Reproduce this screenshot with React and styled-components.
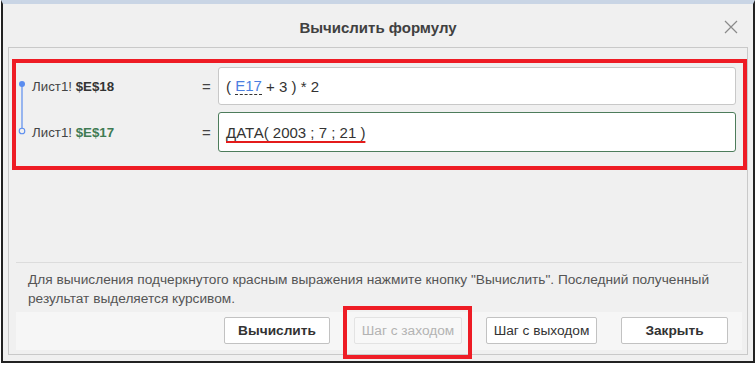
import styled, { createGlobalStyle } from "styled-components";

const GlobalStyle = createGlobalStyle`
    html, body {
        margin: 0;
        padding: 0;
        background: #ffffff;
    }
    body {
        font-family: "Liberation Sans", Arial, sans-serif;
        color: #333;
    }
    * {
        box-sizing: border-box;
    }
`;

const Window = styled.div`
    width: 754px;
    height: 363px;
    margin-left: 1px;
    display: flex;
    flex-direction: column;
    background: #f0f0f0;
    border: 2px solid #222;
    border-top: 4px solid #c9d5e5;
`;

const Header = styled.div`
    height: 43px;
    flex-shrink: 0;
    display: grid;
    grid-template-columns: 1fr auto 1fr;
    align-items: center;
`;

const Title = styled.h2`
    grid-column: 2;
    margin: 3px 0 0;
    font-size: 15px;
    font-weight: bold;
    color: #404040;
`;

const CloseButton = styled.button`
    grid-column: 3;
    justify-self: end;
    margin: 2px 15px 0 0;
    padding: 0;
    width: 15px;
    height: 15px;
    display: flex;
    align-items: center;
    justify-content: center;
    border: none;
    background: transparent;
    cursor: pointer;
`;

const Panel = styled.div`
    flex: 1;
    margin: 0 5px 6px;
    display: flex;
    flex-direction: column;
    border: 1px solid #c9c9c9;
`;

const Highlight = styled.div`
    margin: 11px 0 0 3px;
    padding: 4px 7px 14px 0;
    border: 4px solid #ee1c25;
`;

const Steps = styled.div`
    display: grid;
    grid-template-columns: 16px 168px 18px 1fr;
    grid-auto-rows: auto;
    row-gap: 7px;
    align-items: center;
`;

const Connector = styled.svg`
    grid-column: 1;
    grid-row: 1 / span 2;
    align-self: start;
`;

const Label = styled.div`
    grid-column: 2;
    font-size: 13.3px;
    color: #444;
    white-space: nowrap;
`;

const Ref = styled.b`
    color: ${({ $current }) => ($current ? "#3f7b53" : "#333")};
`;

const Equals = styled.span`
    grid-column: 3;
    padding-left: 2px;
    font-size: 15px;
    color: #444;
`;

const Formula = styled.div`
    grid-column: 4;
    height: ${({ $active }) => ($active ? 40 : 38)}px;
    display: flex;
    align-items: center;
    padding: 0 7px 0 7px;
    background: #fff;
    border: 1px solid ${({ $active }) => ($active ? "#4d7c5b" : "#c8c8c8")};
    border-radius: 3px;
    font-size: 15px;
    color: #333;
    white-space: pre;
`;

const CellRef = styled.span`
    color: #4a7ee0;
    border-bottom: 1.5px dashed #333;
    line-height: 17px;
`;

const Underlined = styled.span`
    text-decoration: underline;
    text-decoration-color: #e41b1b;
    text-decoration-thickness: 1.5px;
    text-decoration-skip-ink: none;
    text-underline-offset: 3px;
`;

const Spacer = styled.div`
    flex: 1;
`;

const Footer = styled.div`
    margin: 0 5px 4px 7px;
    border-top: 1px solid #dcdcdc;
`;

const Hint = styled.p`
    margin: 0;
    padding: 7px 12px 4px;
    font-size: 13.7px;
    line-height: 19px;
    color: #555;
`;

const ButtonBar = styled.div`
    display: flex;
    justify-content: flex-end;
    gap: 24px;
    padding: 5px 14px 6px;
    background: #f6f6f6;
`;

const Button = styled.button`
    height: 27px;
    width: ${({ $width }) => $width}px;
    padding: 0;
    font-family: "Liberation Sans", Arial, sans-serif;
    font-size: 13.7px;
    font-weight: ${({ $primary }) => ($primary ? "bold" : "normal")};
    color: #333;
    background: #fff;
    border: 1px solid #c2c2c2;
    border-radius: 2px;
    cursor: pointer;

    &:disabled {
        color: #b3b3b3;
        background: #f8f8f8;
        border-color: #e3e3e3;
        cursor: default;
    }
`;

const Marked = styled.span`
    position: relative;
    display: flex;

    &::after {
        content: "";
        position: absolute;
        top: -11px;
        left: -11px;
        right: -10px;
        bottom: -15px;
        border: 4px solid #ee1c25;
        pointer-events: none;
    }
`;

export default function App() {
    return (
        <>
            <GlobalStyle />
            <Window>
                <Header>
                    <Title>Вычислить формулу</Title>
                    <CloseButton aria-label="Закрыть">
                        <svg width="14" height="14" viewBox="0 0 14 14">
                            <path d="M1 1L13 13M13 1L1 13" stroke="#8a8a8a" strokeWidth="1.2" fill="none" />
                        </svg>
                    </CloseButton>
                </Header>
                <Panel>
                    <Highlight>
                        <Steps>
                            <Connector width="16" height="85" viewBox="0 0 16 85">
                                <line x1="6" y1="17" x2="6" y2="61" stroke="#5b8def" strokeWidth="1.2" />
                                <circle cx="6" cy="17" r="3" fill="#5b8def" />
                                <circle cx="6" cy="64" r="2.8" fill="#f0f0f0" stroke="#5b8def" strokeWidth="1.1" />
                            </Connector>

                            <Label>Лист1! <Ref>$E$18</Ref></Label>
                            <Equals>=</Equals>
                            <Formula>
                                {"( "}<CellRef>E17</CellRef>{" + 3 ) * 2"}
                            </Formula>

                            <Label>Лист1! <Ref $current>$E$17</Ref></Label>
                            <Equals>=</Equals>
                            <Formula $active>
                                <Underlined>ДАТА( 2003 ; 7 ; 21 )</Underlined>
                            </Formula>
                        </Steps>
                    </Highlight>
                    <Spacer />
                    <Footer>
                        <Hint>
                            Для вычисления подчеркнутого красным выражения нажмите кнопку "Вычислить". Последний полученный результат выделяется курсивом.
                        </Hint>
                        <ButtonBar>
                            <Button $primary $width={106}>Вычислить</Button>
                            <Marked>
                                <Button disabled $width={108}>Шаг с заходом</Button>
                            </Marked>
                            <Button $width={111}>Шаг с выходом</Button>
                            <Button $primary $width={107}>Закрыть</Button>
                        </ButtonBar>
                    </Footer>
                </Panel>
            </Window>
        </>
    );
}
